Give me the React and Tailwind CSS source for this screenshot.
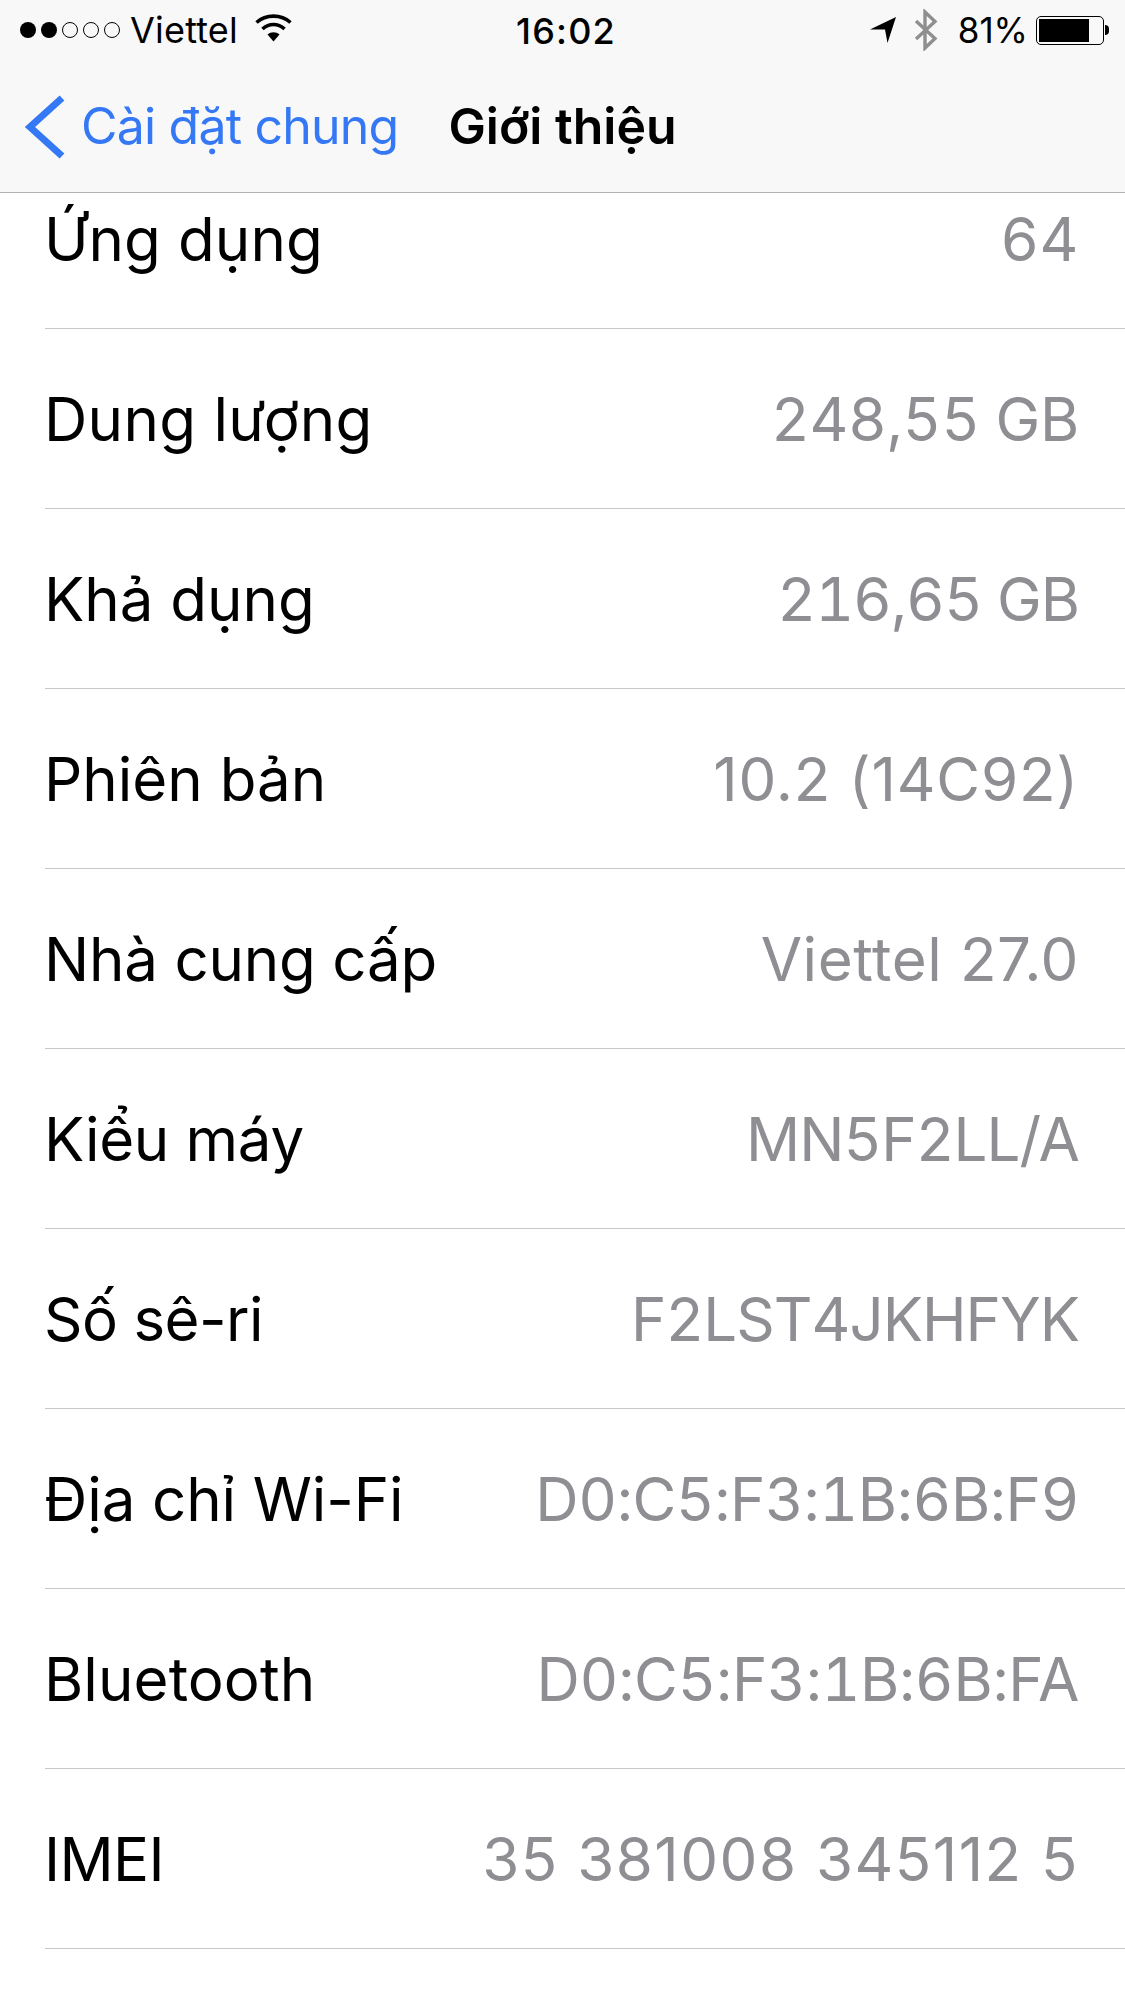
import React from 'react';

// label / value, with the letter spacing each one needs to match the SF widths
const rows = [
  { label: 'Ứng dụng', labelFit: 'tracking-[0.1px]', value: '64', valueFit: 'tabular-nums tracking-[0.5px]' },
  { label: 'Dung lượng', labelFit: 'tracking-[0.3px]', value: '248,55 GB', valueFit: 'tabular-nums tracking-[-0.3px]' },
  { label: 'Khả dụng', labelFit: 'tracking-[0px]', value: '216,65 GB', valueFit: 'tabular-nums tracking-[-1px]' },
  { label: 'Phiên bản', labelFit: 'tracking-[0px]', value: '10.2 (14C92)', valueFit: 'tracking-[0.8px]' },
  { label: 'Nhà cung cấp', labelFit: 'tracking-[-0.2px]', value: 'Viettel 27.0', valueFit: 'tracking-[0.6px]' },
  { label: 'Kiểu máy', labelFit: 'tracking-[-0.3px]', value: 'MN5F2LL/A', valueFit: 'tabular-nums tracking-[-1px]' },
  { label: 'Số sê-ri', labelFit: 'tracking-[-0.6px]', value: 'F2LST4JKHFYK', valueFit: 'tabular-nums tracking-[-1px]' },
  { label: 'Địa chỉ Wi-Fi', labelFit: 'tracking-[-0.1px]', value: 'D0:C5:F3:1B:6B:F9', valueFit: 'tabular-nums tracking-[-0.4px]' },
  { label: 'Bluetooth', labelFit: 'tracking-[0.1px]', value: 'D0:C5:F3:1B:6B:FA', valueFit: 'tabular-nums tracking-[-0.3px]' },
  { label: 'IMEI', labelFit: 'tracking-[-0.6px]', value: '35 381008 345112 5', valueFit: 'tracking-[1.5px]' },
];

function StatusBar() {
  return (
    <div className="h-[60px] relative flex items-center justify-between text-black">
      {/* Left */}
      <div className="flex items-center pl-[20px]">
        <div className="flex items-center gap-[5px]">
          <span className="w-[16px] h-[16px] rounded-full bg-black" />
          <span className="w-[16px] h-[16px] rounded-full bg-black" />
          <span className="w-[16px] h-[16px] rounded-full border border-black" />
          <span className="w-[16px] h-[16px] rounded-full border border-black" />
          <span className="w-[16px] h-[16px] rounded-full border border-black" />
        </div>
        <span className="ml-[10px] text-[36px] leading-none tracking-[0.2px]">Viettel</span>
        <svg className="ml-[17px] -mt-[5px]" width="37" height="28" viewBox="0 0 37 28">
          <path d="M18.5 27.5 L12.5 20.5 C16 17.5 21 17.5 24.5 20.5 Z" fill="#000" />
          <path d="M7.5 15 C14 9 23 9 29.500 15" fill="none" stroke="#000" strokeWidth="3.600" />
          <path d="M1.500 8.500 C11 0 26 0 35.500 8.500" fill="none" stroke="#000" strokeWidth="3.600" />
        </svg>
      </div>
      {/* Time */}
      <div className="absolute left-[516px] top-[13px] text-[36px] leading-[36px] font-medium tracking-[1.2px]">16:02</div>
      {/* Right */}
      <div className="flex items-center pr-[16px]">
        <svg width="28" height="28" viewBox="0 0 28 28">
          <path d="M1 13.500 L27 1 L18.500 27 L16 13.500 Z" fill="#000" />
        </svg>
        <svg className="ml-[17px]" width="24" height="42" viewBox="0 0 24 42">
          <path d="M2 12 L21 29.500 L11 39 L11 3 L21 12.500 L2 30" fill="none" stroke="#8f8f8f" strokeWidth="3.400" />
        </svg>
        <span className="ml-[20px] text-[35px] leading-none">81%</span>
        <div className="ml-[8px] flex items-center">
          <div className="w-[68px] h-[29px] rounded-[5px] border border-black p-[2px]">
            <div className="h-full w-[81%] bg-black" />
          </div>
          <div className="ml-[1px] w-[4px] h-[10px] rounded-r-full bg-black" />
        </div>
      </div>
    </div>
  );
}

function NavBar() {
  return (
    <div className="h-[131px] flex items-start pt-[35px]">
      <svg className="ml-[24px]" width="42" height="64" viewBox="0 0 42 64">
        <path d="M38 3 L6 32 L38 61" fill="none" stroke="#3478f6" strokeWidth="7" />
      </svg>
      <span className="ml-[15px] text-[50px] leading-[62px] text-[#3478f6] tracking-[-0.8px]">Cài đặt chung</span>
      <span className="ml-[50px] text-[50px] leading-[62px] font-semibold text-black">Giới thiệu</span>
    </div>
  );
}

export default function App() {
  return (
    <div className="w-[1125px] h-[2001px] bg-white overflow-hidden font-['Inter','Noto_Sans',sans-serif]">
      <div className="relative z-10 h-[193px] bg-[#f8f8f8] border-b border-[#b2b2b2]">
        <StatusBar />
        <NavBar />
      </div>
      <div className="-mt-[44px] pl-[45px]">
        {rows.map((row) => (
          <div key={row.label} className="h-[180px] border-b border-[#c8c7cc] flex items-center justify-between pr-[46px]">
            <span className={`-ml-[1px] text-[60px] leading-none text-black ${row.labelFit}`}>{row.label}</span>
            <span className={`text-[60px] leading-none text-[#8e8e93] ${row.valueFit}`}>{row.value}</span>
          </div>
        ))}
      </div>
    </div>
  );
}
